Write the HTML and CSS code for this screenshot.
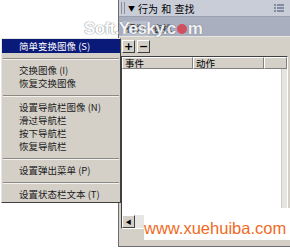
FILE: index.html
```html
<!DOCTYPE html>
<html lang="zh-CN">
<head>
    <meta charset="UTF-8">
    <title>行为 和 查找</title>
    <link rel="stylesheet" href="styles.css">
</head>
<body>
    <div class="panel">
        <div class="panel-head">
            <span class="grip"></span>
            <span class="arrow">▼</span>
            <span class="title">行为 和 查找</span>
            <svg class="opts" width="10" height="9" viewBox="0 0 10 9">
                <path d="M0 1h2M3 1h7M0 4h2M3 4h7M0 7h2M3 7h7" stroke="#3a4a6a" stroke-width="1"/>
            </svg>
        </div>
        <div class="tabs">
            <span class="tab active">行为</span>
            <span class="tab">查找</span>
        </div>
        <div class="toolbar">
            <button class="tool">+</button>
            <button class="tool">−</button>
        </div>
        <div class="list">
            <div class="cols">
                <span class="col first">事件</span>
                <span class="col">动作</span>
                <span class="col last"></span>
            </div>
            <div class="rows">
                <div class="rows-body"></div>
                <div class="vbar"></div>
            </div>
            <div class="hbar">
                <span class="arrow-btn">◀</span>
                <span class="track"></span>
            </div>
        </div>
        <div class="foot"></div>
    </div>

    <div class="menu">
        <div class="item selected">简单变换图像 (S)</div>
        <div class="sep"></div>
        <div class="item">交换图像 (I)</div>
        <div class="item">恢复交换图像</div>
        <div class="sep"></div>
        <div class="item">设置导航栏图像 (N)</div>
        <div class="item">滑过导航栏</div>
        <div class="item">按下导航栏</div>
        <div class="item">恢复导航栏</div>
        <div class="sep"></div>
        <div class="item">设置弹出菜单 (P)</div>
        <div class="sep"></div>
        <div class="item">设置状态栏文本 (T)</div>
    </div>

    <div class="mark-top">Soft.Yesky.c<span class="dot-logo"></span>m</div>
    <div class="mark-bottom">www.xuehuiba.com</div>
</body>
</html>
```

FILE: styles.css
```css
body {
    margin: 0;
    background: #ffffff;
    font-family: "Noto Sans CJK SC", "Liberation Sans", sans-serif;
    font-size: 9.5px;
    color: #000000;
    position: relative;
    width: 290px;
    height: 248px;
    overflow: hidden;
}
.panel {
    margin-left: 118px;
    width: 171px;
    height: 246px;
    border-left: 1px solid #6d6d6d;
    border-bottom: 1px solid #6d6d6d;
    background: #d4d0c8;
    display: flex;
    flex-direction: column;
}
.panel-head {
    height: 16px;
    background: #c9cdd8;
    display: flex;
    align-items: center;
    border-bottom: 1px solid #9aa0ae;
}
.grip {
    width: 2px;
    height: 12px;
    border-left: 1px solid #8a8fa0;
    border-right: 1px solid #8a8fa0;
    margin: 0 3px 0 2px;
}
.arrow {
    font-size: 7px;
    margin-right: 3px;
}
.title {
    font-size: 10px;
    word-spacing: 1px;
}
.opts {
    margin-left: auto;
    margin-right: 6px;
}
.tabs {
    height: 19px;
    background: #a9afbe;
    display: flex;
    align-items: flex-end;
    padding-left: 3px;
}
.tab {
    padding: 0 4px;
    height: 15px;
    line-height: 15px;
    color: #202020;
}
.tab.active {
    background: #b9bfcc;
}
.toolbar {
    height: 19px;
    display: flex;
    align-items: center;
    gap: 2px;
    padding-left: 3px;
    border-top: 1px solid #e8e6e2;
}
.tool {
    width: 13px;
    height: 13px;
    padding: 0;
    font-family: "DejaVu Sans", sans-serif;
    font-size: 11px;
    font-weight: bold;
    line-height: 11px;
    background: #d4d0c8;
    border: 1px solid;
    border-color: #ffffff #404040 #404040 #ffffff;
}
.list {
    flex: 1;
    margin: 0 2px 0 2px;
    border: 1px solid;
    border-color: #404040 #ffffff #ffffff #404040;
    display: flex;
    flex-direction: column;
    background: #ffffff;
}
.cols {
    height: 12px;
    display: flex;
}
.col {
    background: #d4d0c8;
    border: 1px solid;
    border-color: #ffffff #808080 #808080 #ffffff;
    padding-left: 2px;
    line-height: 10px;
    width: 67px;
}
.col.first {
    width: 67px;
}
.col.last {
    flex: 1;
    width: auto;
    padding: 0;
}
.rows {
    flex: 1;
    display: flex;
}
.rows-body {
    flex: 1;
}
.vbar {
    width: 5px;
    background: #e6e4e0;
    border-left: 1px solid #d0ccc4;
}
.hbar {
    height: 13px;
    display: flex;
    background: #e8e6e2;
}
.arrow-btn {
    width: 11px;
    height: 11px;
    font-size: 6px;
    line-height: 11px;
    text-align: center;
    background: #d4d0c8;
    border: 1px solid;
    border-color: #ffffff #404040 #404040 #ffffff;
}
.track {
    flex: 1;
}
.foot {
    height: 17px;
}
.menu {
    position: absolute;
    left: 1px;
    top: 38px;
    width: 118px;
    background: #d4d0c8;
    border: 1px solid;
    border-color: #e8e6e2 #404040 #404040 #e8e6e2;
    padding-bottom: 1px;
}
.item {
    height: 13px;
    line-height: 13px;
    padding-left: 17px;
    white-space: nowrap;
    color: #1a1a1a;
}
.item.selected {
    height: 14px;
    line-height: 14px;
    background: #0a1a78;
    color: #ffffff;
}
.sep {
    height: 11px;
    position: relative;
}
.sep::after {
    content: "";
    position: absolute;
    left: 1px;
    right: 1px;
    top: 5px;
    border-top: 1px solid #8c8984;
    border-bottom: 1px solid #f4f2ee;
}
.mark-top {
    position: absolute;
    left: 84px;
    top: 19px;
    font-family: "Liberation Sans", sans-serif;
    font-size: 17px;
    font-weight: bold;
    color: #ffffff;
    opacity: 0.85;
    text-shadow: 0 0 1px #6b6f7a, 0 0 1px #6b6f7a;
    letter-spacing: -0.6px;
}
.dot-logo {
    display: inline-block;
    width: 10px;
    height: 10px;
    background: #d84050;
    border-radius: 50%;
    margin: 0 1px;
}
.mark-bottom {
    position: absolute;
    left: 144px;
    top: 208px;
    width: 146px;
    height: 32px;
    padding-top: 9px;
    box-sizing: border-box;
    background: #ffffff;
    font-family: "Liberation Sans", sans-serif;
    font-size: 16.5px;
    color: #f06a1e;
    line-height: 22px;
    white-space: nowrap;
}
```
